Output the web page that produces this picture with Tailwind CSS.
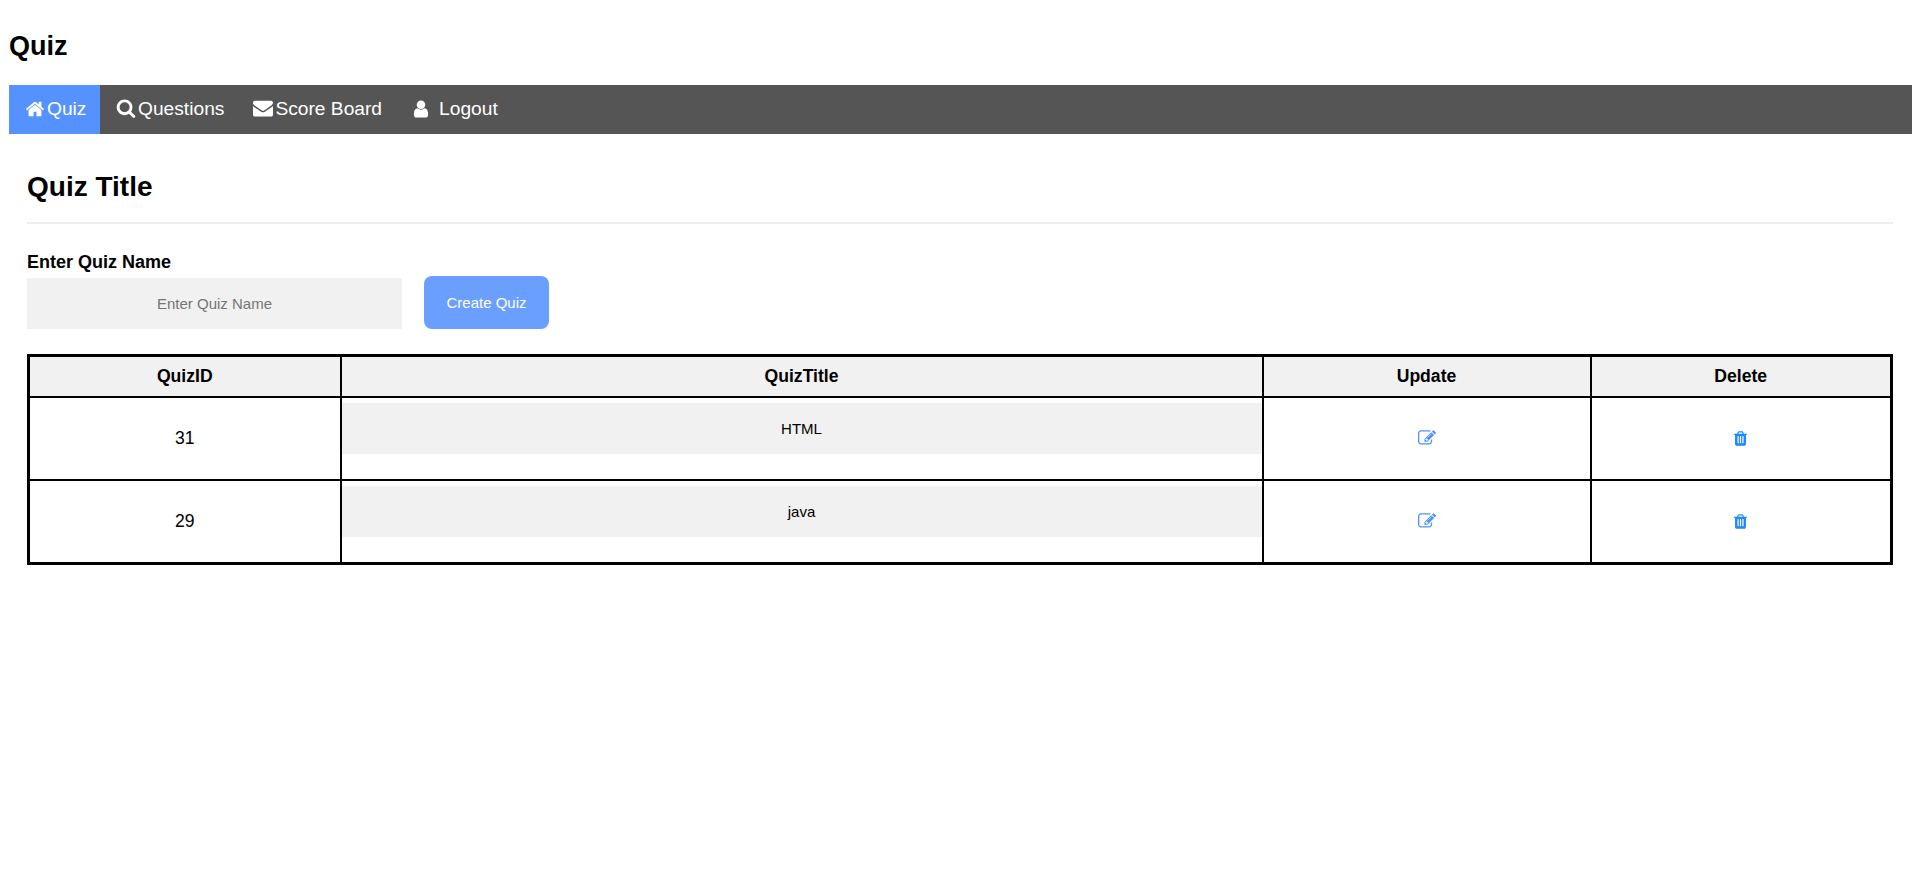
<!DOCTYPE html>
<html lang="en">
<head>
<meta charset="utf-8">
<title>Quiz</title>
<script src="https://cdn.jsdelivr.net/npm/@tailwindcss/browser@4"></script>
</head>
<body class="bg-white text-black font-['Liberation_Sans',Arial,sans-serif]">
<div class="pl-[9px] pr-2">
  <h1 class="h-[85px] pt-[31px] text-[27px] leading-[30px] font-bold">Quiz</h1>
  <nav class="flex h-[49px] items-stretch bg-[#555555] text-[19.2px] text-white">
    <a href="#" class="flex w-[91px] items-center gap-[2px] bg-[#5591ff] pl-[16px]">
      <svg class="size-[20px] -translate-y-px" viewBox="0 0 1792 1792" fill="currentColor"><path d="M1472 992v480q0 26-19 45t-45 19h-384v-384h-256v384h-384q-26 0-45-19t-19-45v-480q0-1 .5-3t.5-3l575-474 575 474q1 2 1 6zm223-69l-62 74q-8 9-21 11h-3q-13 0-21-7l-692-577-692 577q-12 8-24 7-13-2-21-11l-62-74q-8-10-7-23.5t11-21.5l719-599q32-26 76-26t76 26l244 204v-195q0-14 9-23t23-9h192q14 0 23 9t9 23v408l219 182q10 8 11 21.5t-7 23.5z"/></svg>
      <span>Quiz</span>
    </a>
    <a href="#" class="flex items-center gap-[2px] pl-4">
      <svg class="size-[20px] -translate-y-0.5" viewBox="0 0 1792 1792" fill="currentColor"><path d="M1216 832q0-185-131.5-316.5t-316.5-131.5-316.5 131.5-131.5 316.5 131.5 316.5 316.5 131.5 316.5-131.5 131.5-316.5zm512 832q0 52-38 90t-90 38q-54 0-90-38l-343-342q-179 124-399 124-143 0-273.5-55.5t-225-150-150-225-55.5-273.5 55.5-273.5 150-225 225-150 273.5-55.5 273.5 55.5 225 150 150 225 55.5 273.5q0 220-124 399l343 343q37 37 37 90z"/></svg>
      <span>Questions</span>
    </a>
    <a href="#" class="flex items-center gap-[2px] pl-[29px]">
      <svg class="size-[20px] -translate-y-0.5" viewBox="0 0 1792 1792" fill="currentColor"><path d="M1792 710v794q0 66-47 113t-113 47h-1472q-66 0-113-47t-47-113v-794q44 49 101 87 362 246 497 345 57 42 92.5 65.5t94.5 48 110 24.5h2q51 0 110-24.5t94.5-48 92.5-65.5q170-123 498-345 57-39 100-87zm0-294q0 79-49 151t-122 123q-376 261-468 325-10 7-42.5 30.5t-54 38-52 32.5-57.5 27-50 9h-2q-23 0-50-9t-57.5-27-52-32.5-54-38-42.5-30.5q-91-64-262-182.5t-205-142.5q-62-42-117-115.5t-55-136.5q0-78 41.5-130t118.5-52h1472q65 0 112.5 47t47.5 113z"/></svg>
      <span>Score Board</span>
    </a>
    <a href="#" class="flex items-center gap-[8px] pl-[29px]">
      <svg class="size-[20px] -translate-y-px" viewBox="0 0 1792 1792" fill="currentColor"><path d="M1536 1399q0 109-62.5 187t-150.5 78h-854q-88 0-150.5-78t-62.5-187q0-85 8.5-160.5t31.5-152 58.5-131 94-89 134.5-34.5q131 128 313 128t313-128q76 0 134.5 34.5t94 89 58.5 131 31.5 152 8.5 160.5zm-256-887q0 159-112.5 271.5t-271.5 112.5-271.5-112.5-112.5-271.5 112.5-271.5 271.5-112.5 271.5 112.5 112.5 271.5z"/></svg>
      <span>Logout</span>
    </a>
  </nav>
  <main class="pl-[18px] pr-[19px]">
    <h2 class="mt-[38px] text-[28px] leading-[30px] font-bold">Quiz Title</h2>
    <hr class="mt-[20px] h-0.5 border-0 bg-[#eeeeee]">
    <form class="mt-[29px]">
      <label class="block text-[18px] leading-[18px] font-bold">Enter Quiz Name</label>
      <div class="mt-[5px] flex items-end gap-[22px]">
        <input class="h-[51px] w-[375px] bg-[#f1f1f1] text-center text-[15px] placeholder:text-[#757575]" placeholder="Enter Quiz Name">
        <button type="button" class="h-[53px] w-[125px] rounded-lg bg-[#6b9fff] pt-0.5 text-[15px] text-white">Create Quiz</button>
      </div>
    </form>
    <table class="mt-[25px] w-[1866px] table-fixed border-collapse border-[3px] border-black text-center text-[17.6px]">
      <thead class="bg-[#f1f1f1] font-bold">
        <tr class="h-[41px]">
          <th class="w-[312px] border-2 border-black">QuizID</th>
          <th class="w-[922px] border-2 border-black">QuizTitle</th>
          <th class="w-[328px] border-2 border-black">Update</th>
          <th class="border-2 border-black">Delete</th>
        </tr>
      </thead>
      <tbody>
        <tr class="h-[82px]">
          <td class="border-2 border-black">31</td>
          <td class="border-2 border-black p-0 align-top"><div class="mt-[5px] mb-[25px] flex h-[51px] justify-center bg-[#f1f1f1] pt-[18px] text-[15px] leading-[16px]">HTML</div></td>
          <td class="border-2 border-black">
            <svg class="mx-auto size-[18px] text-[#4d90fe]" viewBox="0 0 1792 1792" fill="currentColor"><path d="M888 1184l116-116-152-152-116 116v56h96v96h56zm440-720q-16-16-33 1l-350 350q-17 17-1 33t33-1l350-350q17-17 1-33zm80 594v190q0 119-84.5 203.5t-203.5 84.5h-832q-119 0-203.5-84.5t-84.5-203.5v-832q0-119 84.5-203.5t203.5-84.5h832q63 0 117 25 15 7 18 23 3 17-9 29l-49 49q-14 14-32 8-23-6-45-6h-832q-66 0-113 47t-47 113v832q0 66 47 113t113 47h832q66 0 113-47t47-113v-126q0-13 9-22l64-64q15-15 35-7t20 29zm-96-738l288 288-672 672h-288v-288zm444 132l-92 92-288-288 92-92q28-28 68-28t68 28l152 152q28 28 28 68t-28 68z"/></svg>
          </td>
          <td class="border-2 border-black">
            <svg class="mx-auto size-[17px] text-[#1e88ff]" viewBox="0 0 1792 1792" fill="currentColor"><path d="M704 1376v-704q0-14-9-23t-23-9h-64q-14 0-23 9t-9 23v704q0 14 9 23t23 9h64q14 0 23-9t9-23zm256 0v-704q0-14-9-23t-23-9h-64q-14 0-23 9t-9 23v704q0 14 9 23t23 9h64q14 0 23-9t9-23zm256 0v-704q0-14-9-23t-23-9h-64q-14 0-23 9t-9 23v704q0 14 9 23t23 9h64q14 0 23-9t9-23zm-544-992h448l-48-117q-7-9-17-11h-317q-10 2-17 11zm928 32v64q0 14-9 23t-23 9h-96v948q0 83-47 143.5t-113 60.5h-832q-66 0-113-47.5t-47-132.5v-972h-96q-14 0-23-9t-9-23v-64q0-14 9-23t23-9h309l70-167q15-37 54-63t79-26h320q40 0 79 26t54 63l70 167h309q14 0 23 9t9 23z"/></svg>
          </td>
        </tr>
        <tr class="h-[82px]">
          <td class="border-2 border-black">29</td>
          <td class="border-2 border-black p-0 align-top"><div class="mt-[5px] mb-[25px] flex h-[51px] justify-center bg-[#f1f1f1] pt-[18px] text-[15px] leading-[16px]">java</div></td>
          <td class="border-2 border-black">
            <svg class="mx-auto size-[18px] text-[#4d90fe]" viewBox="0 0 1792 1792" fill="currentColor"><path d="M888 1184l116-116-152-152-116 116v56h96v96h56zm440-720q-16-16-33 1l-350 350q-17 17-1 33t33-1l350-350q17-17 1-33zm80 594v190q0 119-84.5 203.5t-203.5 84.5h-832q-119 0-203.5-84.5t-84.5-203.5v-832q0-119 84.5-203.5t203.5-84.5h832q63 0 117 25 15 7 18 23 3 17-9 29l-49 49q-14 14-32 8-23-6-45-6h-832q-66 0-113 47t-47 113v832q0 66 47 113t113 47h832q66 0 113-47t47-113v-126q0-13 9-22l64-64q15-15 35-7t20 29zm-96-738l288 288-672 672h-288v-288zm444 132l-92 92-288-288 92-92q28-28 68-28t68 28l152 152q28 28 28 68t-28 68z"/></svg>
          </td>
          <td class="border-2 border-black">
            <svg class="mx-auto size-[17px] text-[#1e88ff]" viewBox="0 0 1792 1792" fill="currentColor"><path d="M704 1376v-704q0-14-9-23t-23-9h-64q-14 0-23 9t-9 23v704q0 14 9 23t23 9h64q14 0 23-9t9-23zm256 0v-704q0-14-9-23t-23-9h-64q-14 0-23 9t-9 23v704q0 14 9 23t23 9h64q14 0 23-9t9-23zm256 0v-704q0-14-9-23t-23-9h-64q-14 0-23 9t-9 23v704q0 14 9 23t23 9h64q14 0 23-9t9-23zm-544-992h448l-48-117q-7-9-17-11h-317q-10 2-17 11zm928 32v64q0 14-9 23t-23 9h-96v948q0 83-47 143.5t-113 60.5h-832q-66 0-113-47.5t-47-132.5v-972h-96q-14 0-23-9t-9-23v-64q0-14 9-23t23-9h309l70-167q15-37 54-63t79-26h320q40 0 79 26t54 63l70 167h309q14 0 23 9t9 23z"/></svg>
          </td>
        </tr>
      </tbody>
    </table>
  </main>
</div>
</body>
</html>
